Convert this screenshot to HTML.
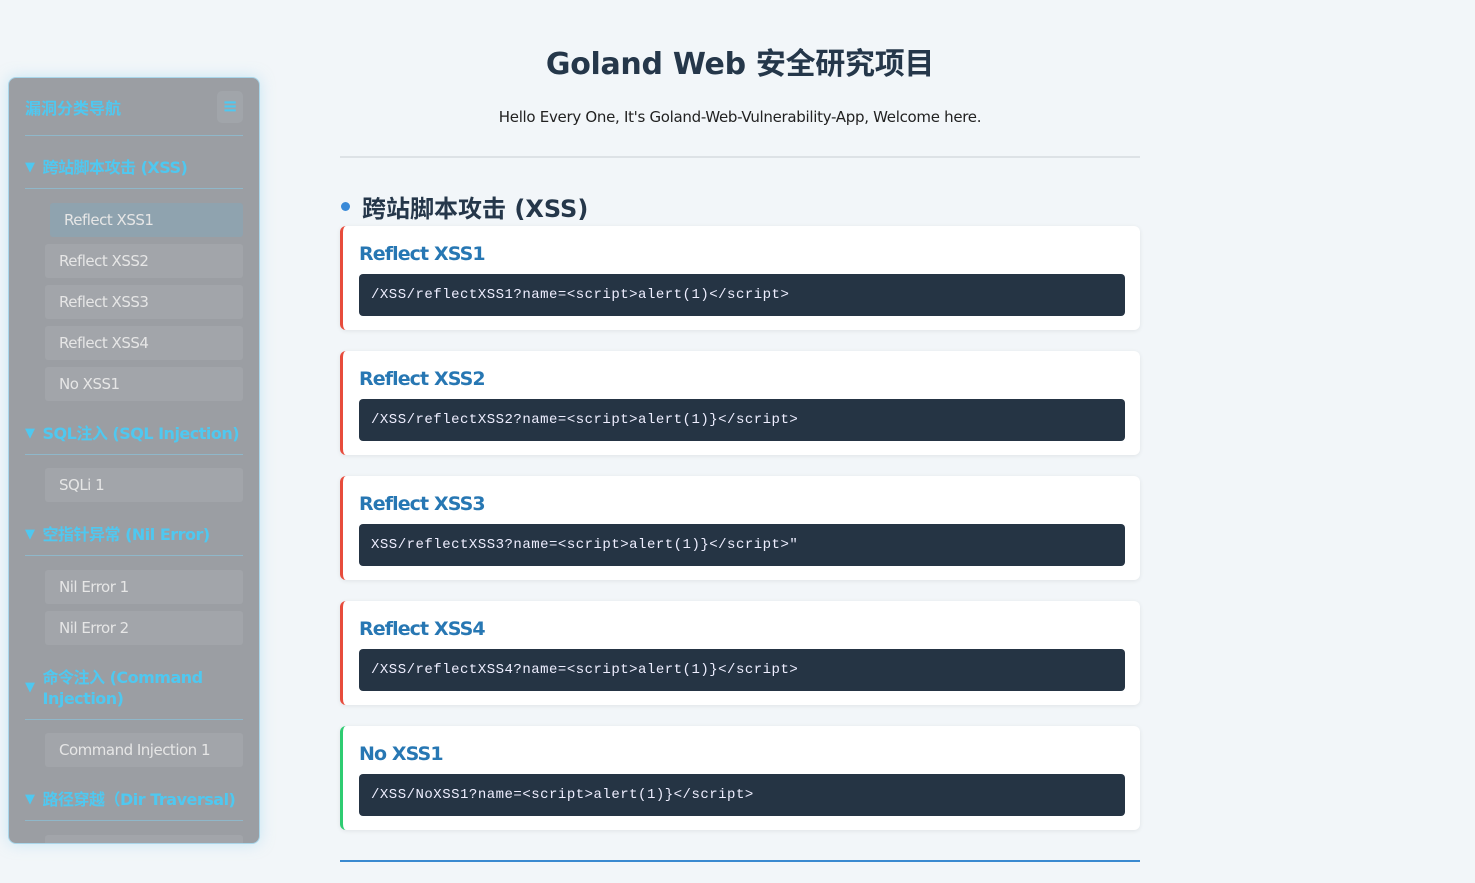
<!DOCTYPE html>
<html><head><meta charset="utf-8"><style>
*{margin:0;padding:0;box-sizing:border-box}
body{width:1475px;height:883px;background:#f2f6f9;font-family:"DejaVu Sans","Liberation Sans","Noto Sans CJK SC",sans-serif;position:relative;overflow:hidden;color:#2c3e50}
.side{position:absolute;left:8px;top:77px;width:252px;height:767px;background:#9b9ea3;border:1px solid #a9d6ea;border-radius:8px;box-shadow:0 0 14px rgba(160,215,240,.5);overflow:hidden;padding:0 16px}
.sh{height:58px;border-bottom:1px solid #8fb7c9;display:flex;align-items:center;justify-content:space-between;color:#4fc8f0;font-weight:bold;font-size:16px}
.menu{width:26px;height:32px;background:#a1a5aa;border-radius:5px;color:#4fc8f0;text-align:center;line-height:32px;font-size:18px}
.cat{color:#4fc8f0;font-weight:bold;font-size:16px;border-bottom:1px solid #8fb7c9;padding:11px 0 10px;display:flex;align-items:center;line-height:21px;letter-spacing:-.5px}
.sh+.cat{margin-top:10px}
.cat span.t{font-size:13px;margin-right:8px}
.items{padding:13.5px 0 4px 20px}
.it{height:34px;background:#a2a5aa;border-radius:3px;margin-bottom:7px;color:#e6e6e6;font-size:15px;line-height:34px;padding-left:14px;letter-spacing:-.5px}
.it.a{background:#8fa3af;margin-left:5px}
.main{position:absolute;left:340px;top:0;width:800px}
h1{text-align:center;font-size:30px;font-weight:bold;margin-top:39px;height:40px;color:#25374a;letter-spacing:-.3px}
.sub{text-align:center;font-size:15px;margin-top:29px;color:#222;letter-spacing:-.3px}
hr{border:0;border-top:2px solid #dde2e6;margin-top:30px}
h2{font-size:24px;margin-top:29px;height:39px;color:#25374a;display:flex;align-items:center}
h2 i{display:inline-block;width:9px;height:9px;border-radius:50%;background:#3a8ad8;margin:0 12px 0 1px}
.card{background:#fff;border-left:3px solid #e74c3c;border-radius:6px;box-shadow:0 1px 5px rgba(0,0,0,.08);height:104px;margin-bottom:21px;padding:17px 15px 0 16px}
.card.g{border-left-color:#2ecc71}
.card h3{font-size:19px;color:#2777b3;height:31px;letter-spacing:-.9px}
.code{background:#253444;border-radius:4px;height:42px;color:#eef;font-family:"Liberation Mono",monospace;font-size:14px;line-height:42px;padding-left:12px;letter-spacing:.5px}
.bl{position:absolute;left:340px;top:860px;width:800px;height:2px;background:#3a8ad0}
</style></head><body>
<div class="side">
<div class="sh"><span>漏洞分类导航</span><div class="menu">≡</div></div>
<div class="cat"><span class="t">▼</span>跨站脚本攻击 (XSS)</div>
<div class="items"><div class="it a">Reflect XSS1</div><div class="it">Reflect XSS2</div><div class="it">Reflect XSS3</div><div class="it">Reflect XSS4</div><div class="it">No XSS1</div></div>
<div class="cat"><span class="t">▼</span>SQL注入 (SQL Injection)</div>
<div class="items"><div class="it">SQLi 1</div></div>
<div class="cat"><span class="t">▼</span>空指针异常 (Nil Error)</div>
<div class="items"><div class="it">Nil Error 1</div><div class="it">Nil Error 2</div></div>
<div class="cat"><span class="t">▼</span>命令注入 (Command<br>Injection)</div>
<div class="items"><div class="it">Command Injection 1</div></div>
<div class="cat"><span class="t">▼</span>路径穿越（Dir Traversal)</div>
<div class="items"><div class="it"></div></div>
</div>
<div class="main">
<h1>Goland Web 安全研究项目</h1>
<div class="sub">Hello Every One, It's Goland-Web-Vulnerability-App, Welcome here.</div>
<hr>
<h2><i></i>跨站脚本攻击 (XSS)</h2>
<div class="card"><h3>Reflect XSS1</h3><div class="code">/XSS/reflectXSS1?name=&lt;script&gt;alert(1)&lt;/script&gt;</div></div>
<div class="card"><h3>Reflect XSS2</h3><div class="code">/XSS/reflectXSS2?name=&lt;script&gt;alert(1)}&lt;/script&gt;</div></div>
<div class="card"><h3>Reflect XSS3</h3><div class="code">XSS/reflectXSS3?name=&lt;script&gt;alert(1)}&lt;/script&gt;"</div></div>
<div class="card"><h3>Reflect XSS4</h3><div class="code">/XSS/reflectXSS4?name=&lt;script&gt;alert(1)}&lt;/script&gt;</div></div>
<div class="card g"><h3>No XSS1</h3><div class="code">/XSS/NoXSS1?name=&lt;script&gt;alert(1)}&lt;/script&gt;</div></div>
</div>
<div class="bl"></div>
</body></html>
